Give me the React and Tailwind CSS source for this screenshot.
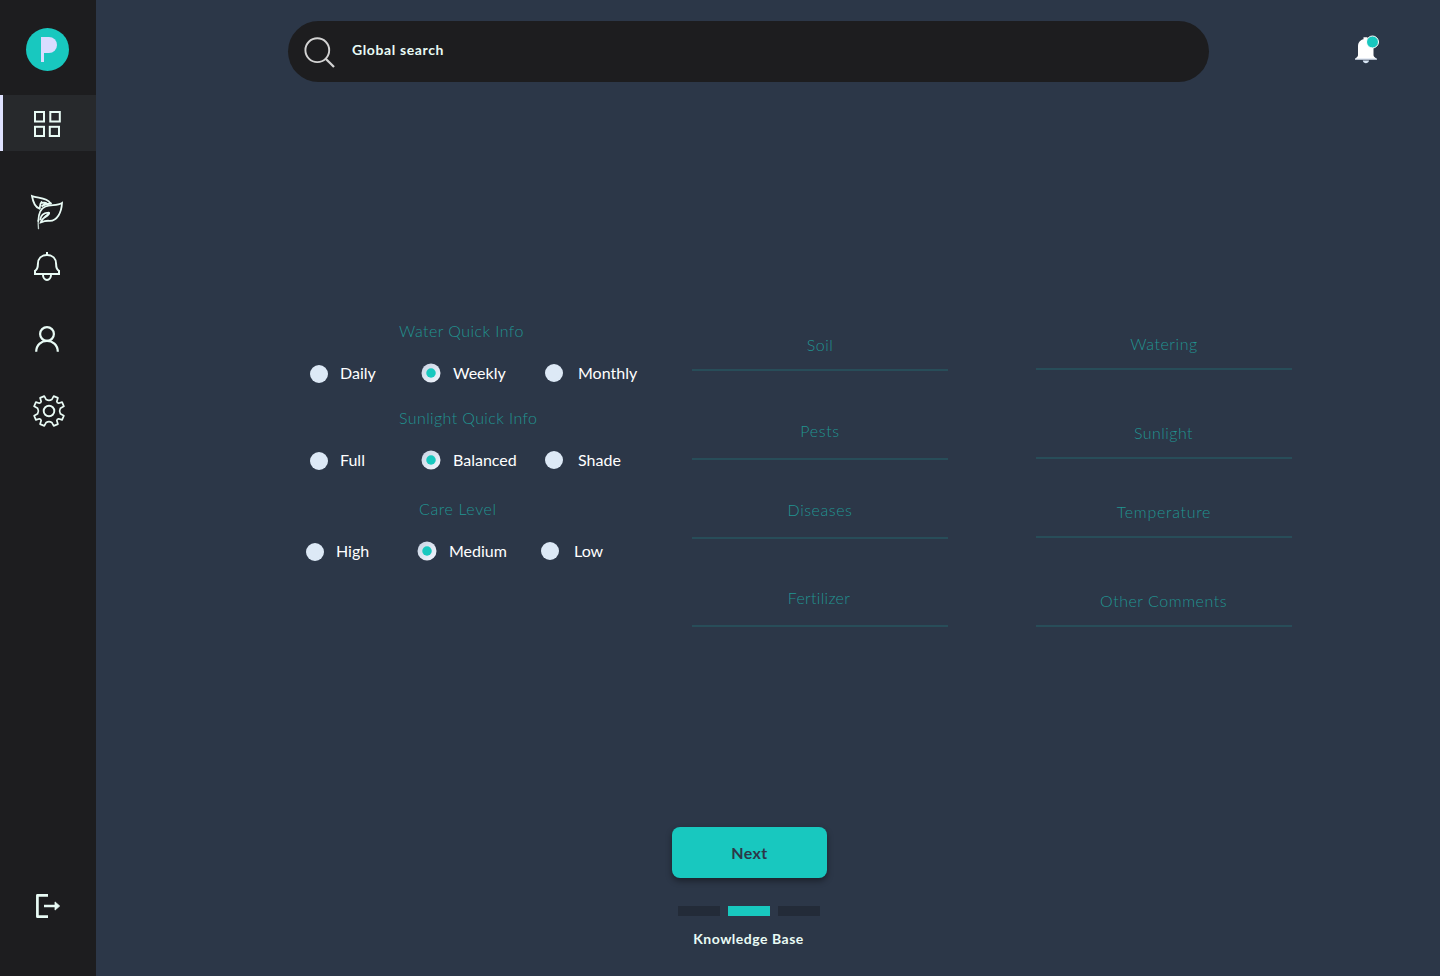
import React from "react";

const svgBase = "block overflow-visible";

function GridIcon() {
  return (
    <svg className={svgBase} width="28" height="28" viewBox="0 0 28 28" fill="none" stroke="#e9fbf5" strokeWidth="2">
      <rect x="2" y="2" width="9" height="9.500" />
      <rect x="17.300" y="2" width="9.500" height="9.500" />
      <rect x="2" y="16.800" width="9" height="9.200" />
      <rect x="16.800" y="16.800" width="9.200" height="9.200" />
    </svg>
  );
}

function LeafIcon() {
  return (
    <svg className={svgBase} width="34" height="36" viewBox="0 0 34 36" fill="none" stroke="#e9fbf5" strokeWidth="1.800" strokeLinejoin="miter" strokeLinecap="round">
      <path d="M9.500 14.700C4.500 13 3 8 2 2C8 4.500 16.500 3.200 20.500 9.300" />
      <path d="M9.800 14C10.200 11.500 9.800 10 11.500 8.200C12.500 9.700 14.500 7.700 16 9L11.500 12.500C14 10.500 18 9.800 21 9.500" />
      <path d="M8.300 27C8.500 19 10.500 14.500 15.500 12.500C21 10.300 27 12 32 9C31.500 18 27.500 27.300 19 26.800C16 26.600 13.500 27.300 10.800 28.300C12.500 23.500 16.500 22.500 19 19.300" />
      <path d="M10.300 25.500C11 20.500 14 19 18 18.700C20.500 18.200 18.500 21.500 15.500 22.800" />
      <path d="M8.300 26.500C8 30 8.200 32 8.500 34.600" strokeWidth="1.300" opacity="0.800" />
    </svg>
  );
}

function BellIcon() {
  return (
    <svg className={svgBase} width="28" height="30" viewBox="0 0 28 30" fill="none" stroke="#e9fbf5" strokeWidth="2">
      <path d="M14 0V3" />
      <path d="M14 3C8.500 3 4.900 6.600 4.900 12C4.900 15.800 4.500 17.600 2 18.800V22H26V18.800C23.500 17.600 23.100 15.800 23.100 12C23.100 6.600 19.500 3 14 3Z" strokeLinejoin="miter" />
      <path d="M9.900 22C9.900 29.900 18.100 29.900 18.100 22" />
    </svg>
  );
}

function UserIcon() {
  return (
    <svg className={svgBase} width="24" height="26" viewBox="0 0 24 26" fill="none" stroke="#e9fbf5" strokeWidth="2.200">
      <circle cx="12" cy="8" r="6.900" />
      <path d="M1.200 25.700C1.400 11.300 22.600 11.300 22.800 25.700" />
    </svg>
  );
}

function GearIcon() {
  return (
    <svg className={svgBase} width="32" height="32" viewBox="0 0 32 32" fill="none" stroke="#e9fbf5" strokeWidth="1.700" strokeLinejoin="round">
      <circle cx="16" cy="16" r="5.300" strokeWidth="1.900" />
      <path d="M11.300 1.100L13.200 4.600Q16 6.200 18.800 4.600L20.700 1.100L24.900 2.900L23.800 6.400Q24 8 25.600 8.200L29.100 7.100L30.900 11.300L27.400 13.200Q25.800 16 27.400 18.800L30.900 20.700L29.100 24.900L25.600 23.800Q24 24 23.800 25.600L24.900 29.100L20.700 30.900L18.800 27.400Q16 25.800 13.200 27.400L11.300 30.900L7.100 29.100L8.200 25.600Q8 24 6.400 23.800L2.900 24.900L1.100 20.700L4.600 18.800Q6.200 16 4.600 13.200L1.100 11.300L2.900 7.100L6.400 8.200Q8 8 8.200 6.400L7.100 2.900Z" />
    </svg>
  );
}

function LogoutIcon() {
  return (
    <svg className={svgBase} width="26" height="26" viewBox="0 0 26 26" fill="none" stroke="#e9fbf5" strokeWidth="2.700" strokeLinejoin="round">
      <path d="M13 2.300H2.400V23.700H13" />
      <path d="M9 13H20" strokeWidth="2.500" />
      <path d="M20 8.900L24.700 13L20 17.100Z" fill="#e9fbf5" strokeWidth="0.800" />
    </svg>
  );
}

function Sidebar() {
  return (
    <aside className="flex w-24 shrink-0 flex-col bg-[#1d1d1f]">
      <div className="ml-[26px] mt-7 flex h-[43px] w-[43px] items-start rounded-full bg-[#18c8bf] pl-[15px] pt-[9px]">
        <div className="h-[25px] w-[3px] bg-[#d9dcff]" />
        <div className="h-[16px] w-[13px] rounded-r-[8px] bg-[#d9dcff]" />
      </div>
      <div className="mt-6 flex h-14 items-center border-l-[3px] border-[#dfe2ff] bg-[#27292c] pl-[30px] pt-[2px]">
        <GridIcon />
      </div>
      <div className="ml-[30px] mt-[43px]"><LeafIcon /></div>
      <div className="ml-[33px] mt-[22px]"><BellIcon /></div>
      <div className="ml-[35px] mt-11"><UserIcon /></div>
      <div className="ml-[33px] mt-[43px]"><GearIcon /></div>
      <div className="mb-[57px] ml-[35px] mt-auto"><LogoutIcon /></div>
    </aside>
  );
}

function Header() {
  return (
    <header className="flex pl-48 pt-[21px]">
      <div className="flex h-[61px] w-[921px] rounded-full bg-[#1d1d1f] pl-4 pt-4">
        <svg className={svgBase} width="32" height="32" viewBox="0 0 32 32" fill="none" stroke="#d3d3d3" strokeWidth="1.900">
          <circle cx="13.300" cy="13.200" r="11.900" />
          <path d="M21.700 21.700L30 30" strokeWidth="2.300" />
        </svg>
        <span className="ml-4 mt-px whitespace-nowrap text-[14px] font-bold leading-6 tracking-[0.620px] text-[#e9fbf5]">Global search</span>
      </div>
      <svg className="ml-[145px] mt-[14px] block overflow-visible" width="28" height="30" viewBox="0 0 28 30">
        <path d="M1 24.600C1.200 22.500 4 22.500 4 20V11.500C4 7 6.500 5 9.500 4.200V2.300H13.500V4.200C17 5 19.500 7 19.500 11.500V20C19.500 22.500 22.500 22.500 23 24.600Z" fill="#fff" />
        <path d="M1 23.600H23V24.600H1Z" fill="#c3d0e3" />
        <path d="M8.800 25.500H15C14.500 29.100 9.300 29.100 8.800 25.500Z" fill="#d9e6f5" />
        <circle cx="18.500" cy="7" r="6" fill="#18c8bf" stroke="#fff" strokeWidth="1" />
      </svg>
    </header>
  );
}

function Radio({ checked, children, className }) {
  return (
    <label className={`flex shrink-0 items-center ${className}`}>
      {checked ? (
        <span className="flex h-5 w-5 scale-95 items-center justify-center rounded-full bg-linear-to-br from-[#c6d2e2] to-[#f4f8ff]">
          <span className="h-[10px] w-[10px] rounded-full bg-[#18c8bf]" />
        </span>
      ) : (
        <span className="h-[18px] w-[18px] rounded-full bg-[#dde9f6]" />
      )}
      <span className="whitespace-nowrap">{children}</span>
    </label>
  );
}

function RadioGroup({ title, titleClass, options, className }) {
  return (
    <section className={className}>
      <h2 className={`whitespace-nowrap text-[16px] font-light leading-6 text-[#219491] ${titleClass}`}>{title}</h2>
      <div className="mt-[18px] flex h-6 items-center text-[16px] leading-6 text-white">
        <Radio className="w-[111px] gap-3 [&>span:first-child]:mt-[2px]">{options[0]}</Radio>
        <Radio checked className="w-[124px] gap-3">{options[1]}</Radio>
        <Radio className="gap-[15px]">{options[2]}</Radio>
      </div>
    </section>
  );
}

function Field({ label, className, labelClass }) {
  return (
    <div className={`flex flex-col items-center justify-end border-b-2 border-[#284d59] ${className}`}>
      <span className={`whitespace-nowrap text-[16px] font-light leading-6 text-[#219491] ${labelClass}`}>{label}</span>
    </div>
  );
}

export default function App() {
  return (
    <div className="flex h-[976px] w-[1440px] overflow-hidden bg-[#2c3748] font-['Lato',sans-serif]">
      <Sidebar />
      <main className="flex min-w-0 flex-1 flex-col">
        <Header />
        <div className="flex pt-[237px]">
          <div className="ml-[210px] w-[386px]">
            <RadioGroup className="pl-1" title="Water Quick Info" titleClass="pl-[89px] tracking-[0.440px]" options={["Daily", "Weekly", "Monthly"]} />
            <RadioGroup className="mt-[21px] pl-1" title="Sunlight Quick Info" titleClass="pl-[89px] tracking-[0.390px]" options={["Full", "Balanced", "Shade"]} />
            <RadioGroup className="mt-[25px]" title="Care Level" titleClass="pl-[113px] tracking-[0.600px]" options={["High", "Medium", "Low"]} />
          </div>
          <div className="w-64">
            <Field className="h-[52px] pb-3" label="Soil" labelClass="tracking-[0.5px]" />
            <Field className="h-[89px] pb-[15px]" label="Pests" labelClass="tracking-[0.650px]" />
            <Field className="h-[79px] pb-[15px]" label="Diseases" labelClass="tracking-[0.550px]" />
            <Field className="h-[88px] pb-[15px]" label="Fertilizer" labelClass="pr-0.5 tracking-[0.300px]" />
          </div>
          <div className="ml-[88px] w-64">
            <Field className="h-[51px] pb-3" label="Watering" labelClass="tracking-[0.550px]" />
            <Field className="h-[89px] pb-3" label="Sunlight" labelClass="pr-px tracking-[0.450px]" />
            <Field className="h-[79px] pb-3" label="Temperature" labelClass="tracking-[0.700px]" />
            <Field className="h-[89px] pb-3" label="Other Comments" labelClass="pr-px tracking-[0.530px]" />
          </div>
        </div>
        <footer className="mb-[25px] ml-[576px] mt-auto flex w-[155px] flex-col items-center">
          <button className="h-[51px] w-full rounded-lg bg-[#18c8bf] text-[16px] font-bold tracking-[0.4px] text-[#2d3748] shadow-[0_3px_6px_rgba(0,0,0,0.4)]">Next</button>
          <div className="mt-7 flex gap-2 pr-px">
            <span className="h-[10px] w-[42px] bg-[#232b38]" />
            <span className="h-[10px] w-[42px] bg-[#18c8bf]" />
            <span className="h-[10px] w-[42px] bg-[#232b38]" />
          </div>
          <p className="mt-[11px] whitespace-nowrap pr-[2px] text-[14px] font-bold leading-6 tracking-[0.500px] text-[#e9fbf5]">Knowledge Base</p>
        </footer>
      </main>
    </div>
  );
}
